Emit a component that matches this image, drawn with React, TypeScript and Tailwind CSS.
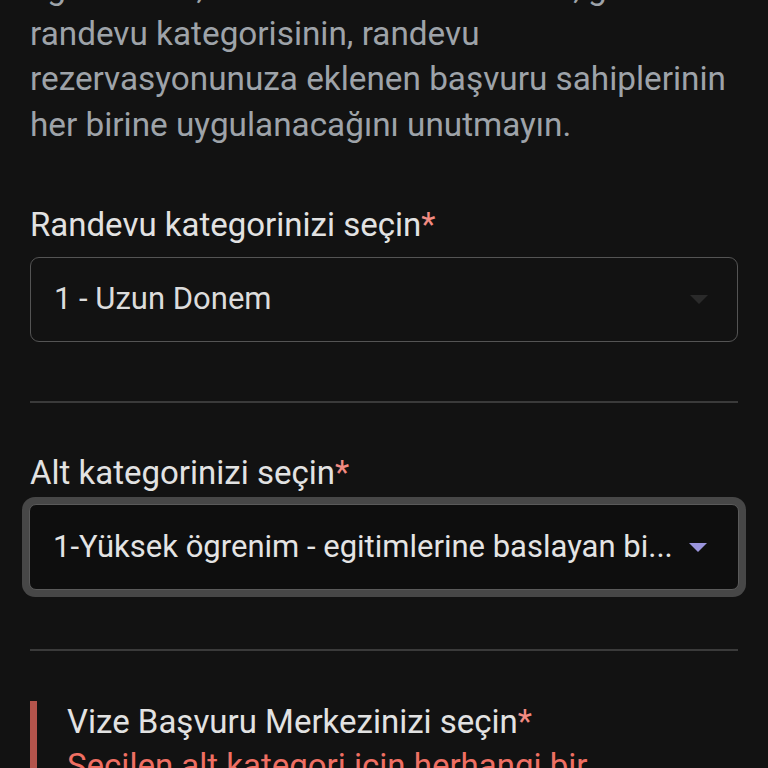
import React from "react";

const font = { fontFamily: "Roboto, 'Noto Sans', sans-serif" };

function Arrow({ color }: { color: string }) {
  return (
    <svg width="20" height="11" viewBox="0 0 20 11" className="shrink-0">
      <path d="M1 1 L19 1 L10 10 Z" fill={color} />
    </svg>
  );
}

export default function App() {
  return (
    <div className="w-[768px] h-[768px] overflow-hidden bg-[#121212]" style={font}>
      <div className="px-[30px] mt-[-35px]">
        <p className="text-[33.3px] leading-[45.5px] text-[#9ea3a9] whitespace-nowrap">
          İlgili alanlar, her bir alan ile tüm kabul, genel
          <br />
          randevu kategorisinin, randevu
          <br />
          rezervasyonunuza eklenen başvuru sahiplerinin
          <br />
          her birine uygulanacağını unutmayın.
        </p>

        <div className="mt-[58px] text-[33px] leading-[40px] text-[#e2e2e2]">
          Randevu kategorinizi seçin<span className="text-[#f28b82]">*</span>
        </div>
        <div className="mt-[12px] h-[85px] rounded-[9px] border-[1.5px] border-[#545454] flex items-center justify-between pl-[23px] pr-[28px]">
          <span className="text-[31px] text-[#dcdcdc]">1 - Uzun Donem</span>
          <Arrow color="#2a2a2a" />
        </div>

        <div className="mt-[59px] h-[2px] bg-[#3a3a3a]" />

        <div className="mt-[50px] text-[33px] leading-[40px] text-[#e2e2e2]">
          Alt kategorinizi seçin<span className="text-[#f28b82]">*</span>
        </div>
        <div className="mt-[4px] mx-[-8px] rounded-[13px] bg-[#474747] p-[7px]">
          <div className="h-[86px] rounded-[7px] border border-[#5a5a5a] bg-[#0e0e0e] flex items-center justify-between pl-[23px] pr-[30px]">
            <span className="text-[31px] text-[#e4e4e4] whitespace-nowrap">
              1-Yüksek ögrenim - egitimlerine baslayan bi...
            </span>
            <Arrow color="#9a94dc" />
          </div>
        </div>

        <div className="mt-[52px] h-[2px] bg-[#3a3a3a]" />

        <div className="mt-[50px] border-l-[7px] border-[#b4544c] pl-[30px] pt-[1px]">
          <div className="text-[33px] leading-[40px] text-[#e2e2e2] whitespace-nowrap">
            Vize Başvuru Merkezinizi seçin<span className="text-[#f28b82]">*</span>
          </div>
          <div className="mt-[4px] text-[33px] leading-[40px] text-[#ef6f63] whitespace-nowrap">
            Seçilen alt kategori için herhangi bir
          </div>
        </div>
      </div>
    </div>
  );
}
